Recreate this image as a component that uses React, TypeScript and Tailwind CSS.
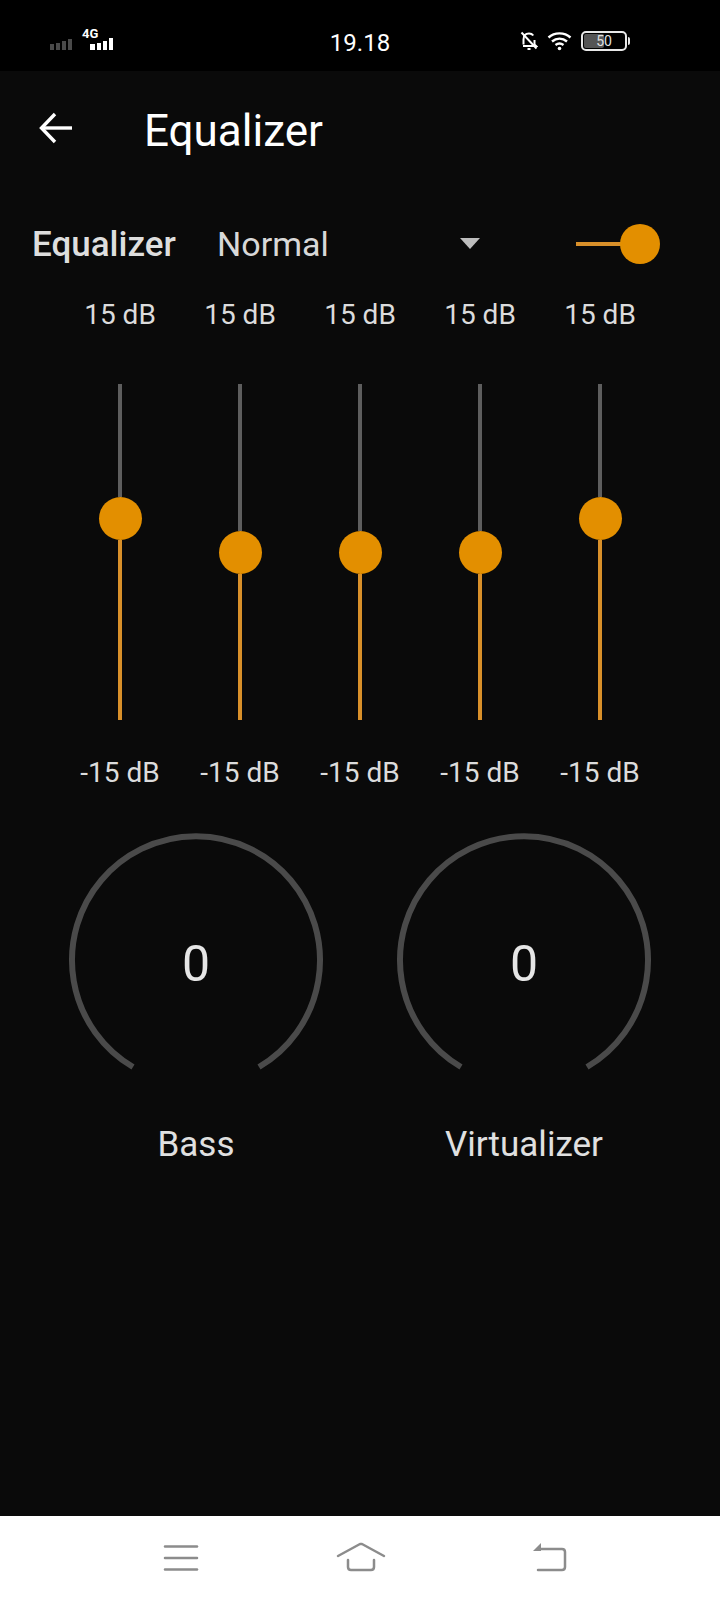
import React from "react";

const FONT = { fontFamily: "Roboto, 'Noto Sans', sans-serif" };

function Signal() {
  return (
    <svg width="70" height="24" viewBox="0 0 70 24" className="block">
      <g fill="#4a4a4a">
        <rect x="0" y="14" width="4" height="6" />
        <rect x="6" y="13" width="4" height="7" />
        <rect x="12" y="11" width="4" height="9" />
        <rect x="18" y="9" width="4" height="11" />
      </g>
      <g fill="#ffffff">
        <rect x="40" y="14" width="5" height="6" />
        <rect x="47" y="13" width="4" height="7" />
        <rect x="53" y="11" width="4" height="9" />
        <rect x="59" y="8" width="4" height="12" />
      </g>
    </svg>
  );
}

function Slider({ top, bottom }: { top: string; bottom: string }) {
  return (
    <div className="flex h-[336px] flex-col items-center">
      <div className={`w-[4px] bg-[#5e5e5e] ${top}`} />
      <div className="h-[43px] w-[43px] shrink-0 rounded-full bg-[#e38f00]" />
      <div className={`w-[4px] bg-[#d9902a] ${bottom}`} />
    </div>
  );
}

function Knob({ label }: { label: string }) {
  return (
    <div className="flex flex-col items-center">
      <div className="relative h-[260px] w-[260px]">
        <svg width="260" height="260" viewBox="0 0 260 260" className="block">
          <path
            d="M67 237 A124 124 0 1 1 193 237"
            fill="none"
            stroke="#4a4a4a"
            strokeWidth="6"
          />
        </svg>
        <div className="absolute inset-0 flex items-center justify-center pt-[8px] text-[50px] font-normal leading-none text-[#e6e6e6]">
          0
        </div>
      </div>
      <div className="mt-[35px] text-[35px] leading-[40px] text-[#e0e0e0]">{label}</div>
    </div>
  );
}

export default function App() {
  const sliders = [
    { top: "h-[113px]", bottom: "h-[180px]" },
    { top: "h-[147px]", bottom: "h-[146px]" },
    { top: "h-[147px]", bottom: "h-[146px]" },
    { top: "h-[147px]", bottom: "h-[146px]" },
    { top: "h-[113px]", bottom: "h-[180px]" },
  ];
  return (
    <div className="flex h-[1600px] w-[720px] flex-col overflow-hidden bg-[#0a0a0a]" style={FONT}>
      {/* Status bar */}
      <div className="relative flex h-[71px] shrink-0 items-center bg-black text-white">
        <div className="relative ml-[50px] mt-[12px]">
          <Signal />
          <span className="absolute left-[32px] top-[-3px] text-[13px] font-bold leading-none">4G</span>
        </div>
        <div className="absolute left-0 right-0 top-[28px] text-center text-[24px] leading-[30px]">19.18</div>
        <div className="ml-auto mr-[93px] mt-[11px] flex items-center">
          <svg width="18" height="20" viewBox="0 0 18 20" fill="none" stroke="#fff" strokeWidth="2" className="mr-[9px]">
            <path d="M3.5 13.5V8.5C3.5 5 5.5 2.5 9 2.5c2 0 3.4.8 4.3 2M14.5 9v4.5l1.5 1.5H3" />
            <path d="M7.5 18h3" />
            <path d="M1.5 1.5L16.5 17.5" />
          </svg>
          <svg width="25" height="20" viewBox="0 0 25 20" fill="none" stroke="#fff" strokeWidth="2.4" className="mr-[9px]">
            <path d="M1.5 6.5C7.5 1 17.5 1 23.5 6.5" />
            <path d="M5 10.5C9.5 6.7 15.5 6.7 20 10.5" />
            <path d="M8.5 14C11 12.2 14 12.2 16.5 14" />
            <circle cx="12.5" cy="17.5" r="1.8" fill="#fff" stroke="none" />
          </svg>
          <div className="relative flex h-[20px] w-[46px] items-center rounded-[5px] border-2 border-[#e8e8e8]">
            <div className="ml-[1px] h-[14px] w-[20px] rounded-[2px] bg-[#555555]" />
            <span className="absolute inset-0 flex items-center justify-center text-[14px] leading-none text-[#e0e0e0]">50</span>
            <div className="absolute right-[-5px] h-[8px] w-[2px] rounded-r-[2px] bg-[#e8e8e8]" />
          </div>
        </div>
      </div>

      {/* Header */}
      <div className="flex h-[114px] shrink-0 items-center">
        <svg width="34" height="32" viewBox="0 0 34 32" fill="none" stroke="#fff" strokeWidth="3.4" className="ml-[39px]">
          <path d="M33 16H3" />
          <path d="M16 2L2.5 16L16 30" />
        </svg>
        <h1 className="ml-[71px] mt-[5px] text-[44px] font-normal leading-none text-white">Equalizer</h1>
      </div>

      {/* Preset row */}
      <div className="mt-[21px] flex h-[78px] shrink-0 items-center pb-[2px]">
        <span className="ml-[32px] w-[185px] text-[35px] font-medium leading-none text-[#dedede]">Equalizer</span>
        <span className="text-[34px] leading-none text-[#d8d8d8]">Normal</span>
        <svg width="20" height="11" viewBox="0 0 20 11" className="ml-[131px] mt-[-2px]">
          <path d="M0 0H20L10 11Z" fill="#bdbdbd" />
        </svg>
        <div className="ml-[96px] h-[4px] w-[50px] bg-[#d9902a]" />
        <div className="ml-[-6px] h-[40px] w-[40px] rounded-full bg-[#e38f00]" />
      </div>

      {/* Equalizer sliders */}
      <div className="grid shrink-0 grid-cols-5 px-[60px] pt-[16px] text-center">
        {[0, 1, 2, 3, 4].map((i) => (
          <div key={i} className="text-[28px] leading-[30px] text-[#dcdcdc]">15 dB</div>
        ))}
      </div>
      <div className="mt-[54px] grid shrink-0 grid-cols-5 px-[60px]">
        {sliders.map((s, i) => (
          <Slider key={i} top={s.top} bottom={s.bottom} />
        ))}
      </div>
      <div className="mt-[38px] grid shrink-0 grid-cols-5 px-[60px] text-center">
        {[0, 1, 2, 3, 4].map((i) => (
          <div key={i} className="text-[28px] leading-[30px] text-[#dcdcdc]">-15 dB</div>
        ))}
      </div>

      {/* Knobs */}
      <div className="mt-[42px] grid shrink-0 grid-cols-2 px-[32px]">
        <Knob label="Bass" />
        <Knob label="Virtualizer" />
      </div>

      {/* Nav bar */}
      <div className="mt-auto flex h-[84px] shrink-0 items-start bg-white pl-[163px] pt-[26px]">
        <svg width="36" height="32" viewBox="0 0 36 32" fill="none" stroke="#8c8c8c" strokeWidth="2.5" strokeLinecap="round">
          <path d="M2 4.5H34" />
          <path d="M2 16H34" />
          <path d="M2 27.5H34" />
        </svg>
        <svg width="50" height="32" viewBox="0 0 50 32" fill="none" stroke="#8c8c8c" strokeWidth="2.5" strokeLinecap="round" strokeLinejoin="round" className="ml-[137px]">
          <path d="M2 14L24 2H26L48 14" />
          <path d="M12 18V25C12 27 13 28 15 28H35C37 28 38 27 38 25V18" />
        </svg>
        <svg width="36" height="32" viewBox="0 0 36 32" fill="none" className="ml-[146px]">
          <path d="M8 7H30C32 7 33 8 33 10V25C33 27 32 28 30 28H6" stroke="#8c8c8c" strokeWidth="2.5" strokeLinecap="round" />
          <path d="M9 1V9H1Z" fill="#8c8c8c" />
        </svg>
      </div>
    </div>
  );
}
